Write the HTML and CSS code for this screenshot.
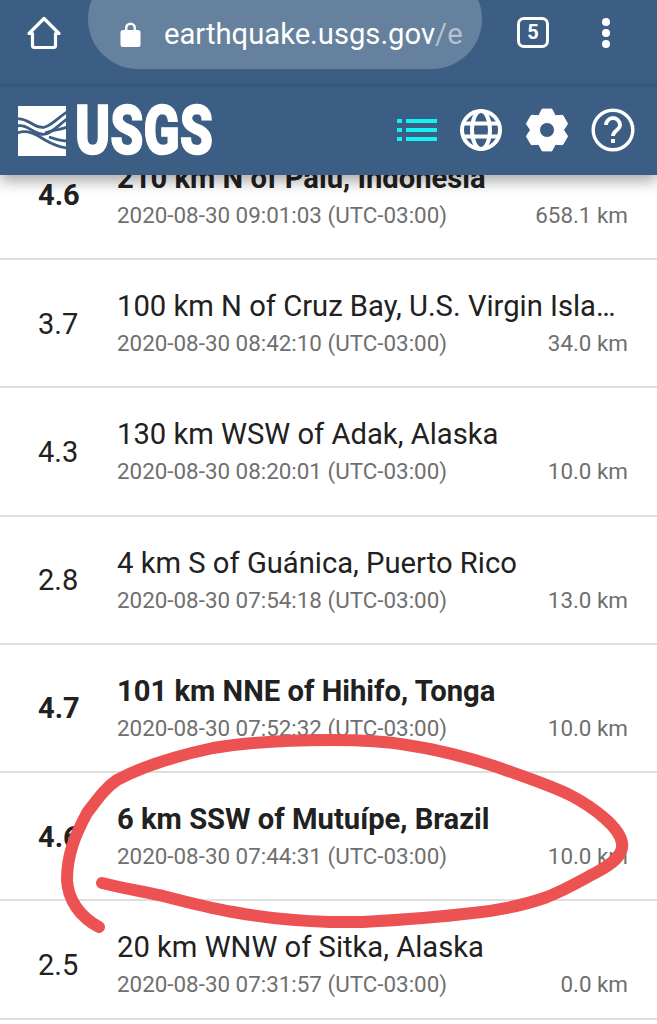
FILE: index.html
```html
<!DOCTYPE html>
<html>
<head>
  <meta name="viewport" content="width=device-width, initial-scale=1">
  <link rel="stylesheet" href="styles.css">
  <title>Latest Earthquakes</title>
</head>
<body>

<div class="page">
  <header class="header">
    <div class="browserBar">
      <svg class="homeIcon" viewBox="0 0 34 34" fill="none" stroke="#fff" stroke-width="3.2" stroke-linejoin="round" stroke-linecap="round">
        <path d="M2 17.5 17 2.5l15 15h-3.500v12a2 2 0 0 1-2 2h-19a2 2 0 0 1-2-2v-12z"/>
      </svg>
      <div class="urlPill">
        <svg class="lockIcon" viewBox="0 0 21 26" fill="#fff">
          <path d="M5 10V7a5.500 5.500 0 0 1 11 0v3h-2.400V7a3.100 3.100 0 0 0-6.200 0v3z"/>
          <rect x="0.500" y="9" width="20" height="17" rx="2.500"/>
        </svg>
        <span class="urlText">earthquake.usgs.gov<span class="urlFaded">/e</span></span>
      </div>
      <div class="tabCount">5</div>
      <div class="menuDots"><i></i><i></i><i></i></div>
    </div>

    <div class="appBar">
      <div class="logo">
        <svg class="logoMark" viewBox="0 0 48 50">
          <rect width="48" height="50" fill="#fff"/>
          <g fill="none" stroke="#3c5e84" stroke-width="2.800">
            <path d="M-1 13C10 11 17 24 27 21 34 19 41 11 49 6"/>
            <path d="M-1 20C10 17 17 31 28 28 35 26 42 18 49 13"/>
            <path d="M-1 27C10 23 19 29 27 34 34 38 41 41 49 42"/>
            <path d="M27 27C34 24 42 24 49 21"/>
            <path d="M31 31C37 33 43 35 49 35"/>
          </g>
        </svg>
        <span class="logoText">USGS</span>
      </div>
      <div class="appIcons">
        <svg class="appIcon listIcon" viewBox="0 0 40 24" fill="#13f2f2">
          <rect x="0" y="1" width="5" height="4"/>
          <rect x="9" y="1" width="31" height="4"/>
          <rect x="0" y="10" width="5" height="4"/>
          <rect x="9" y="10" width="31" height="4"/>
          <rect x="0" y="19" width="5" height="4"/>
          <rect x="9" y="19" width="31" height="4"/>
        </svg>
        <svg class="appIcon" viewBox="0 0 44 44" fill="none" stroke="#fff" stroke-width="4">
          <circle cx="22" cy="22" r="19"/>
          <ellipse cx="22" cy="22" rx="9" ry="19"/>
          <path d="M5 15.500h34M5 28.500h34"/>
        </svg>
        <svg class="appIcon" viewBox="-22 -22 44 44" fill="#fff">
          <path fill-rule="evenodd" stroke="#fff" stroke-width="1" stroke-linejoin="round" d="M-4.800-20.900 4.800-20.900 8.250-14.300 15.700-14.700 20.600-6.300 16.500 0 20.600 6.300 15.700 14.700 8.250 14.300 4.800 20.900-4.800 20.900-8.250 14.300-15.700 14.700-20.600 6.300-16.500 0-20.600-6.300-15.700-14.700-8.250-14.300zM7.500 0a7.500 7.500 0 1 0-15 0 7.500 7.500 0 1 0 15 0z"/>
        </svg>
        <svg class="appIcon" viewBox="0 0 44 44" fill="none" stroke="#fff" stroke-width="3.400">
          <circle cx="22" cy="22" r="19.800"/>
          <path d="M15 17a7 7 0 0 1 14 0c0 5-7 5.500-7 11" stroke-width="3.800"/>
          <rect x="20" y="31" width="4" height="4" fill="#fff" stroke="none"/>
        </svg>
      </div>
    </div>
  </header>

  <main class="quakeList">
    <div class="quake major">
      <div class="mag">4.6</div>
      <div class="details">
        <div class="place">210 km N of Palu, Indonesia</div>
        <div class="meta"><span>2020-08-30 09:01:03 (UTC-03:00)</span><span>658.1 km</span></div>
      </div>
    </div>
    <div class="quake">
      <div class="mag">3.7</div>
      <div class="details">
        <div class="place">100 km N of Cruz Bay, U.S. Virgin Islands</div>
        <div class="meta"><span>2020-08-30 08:42:10 (UTC-03:00)</span><span>34.0 km</span></div>
      </div>
    </div>
    <div class="quake">
      <div class="mag">4.3</div>
      <div class="details">
        <div class="place">130 km WSW of Adak, Alaska</div>
        <div class="meta"><span>2020-08-30 08:20:01 (UTC-03:00)</span><span>10.0 km</span></div>
      </div>
    </div>
    <div class="quake">
      <div class="mag">2.8</div>
      <div class="details">
        <div class="place">4 km S of Guánica, Puerto Rico</div>
        <div class="meta"><span>2020-08-30 07:54:18 (UTC-03:00)</span><span>13.0 km</span></div>
      </div>
    </div>
    <div class="quake major">
      <div class="mag">4.7</div>
      <div class="details">
        <div class="place">101 km NNE of Hihifo, Tonga</div>
        <div class="meta"><span>2020-08-30 07:52:32 (UTC-03:00)</span><span>10.0 km</span></div>
      </div>
    </div>
    <div class="quake major">
      <div class="mag">4.6</div>
      <div class="details">
        <div class="place">6 km SSW of Mutuípe, Brazil</div>
        <div class="meta"><span>2020-08-30 07:44:31 (UTC-03:00)</span><span>10.0 km</span></div>
      </div>
    </div>
    <div class="quake lastQuake">
      <div class="mag">2.5</div>
      <div class="details">
        <div class="place">20 km WNW of Sitka, Alaska</div>
        <div class="meta"><span>2020-08-30 07:31:57 (UTC-03:00)</span><span>0.0 km</span></div>
      </div>
    </div>
  </main>

  <!-- hand drawn circle on top of the list -->
  <svg class="scribble" viewBox="0 0 657 1024" fill="none" stroke="#ed5253" stroke-width="12" stroke-linecap="round" stroke-linejoin="round">
    <path d="M99 927C80 917 68 900 67 880 67 855 75 835 87 813 97 800 105 788 117 780 145 765 180 755 213 748 250 742 290 740 330 740 360 740 385 741 407 745 440 750 470 758 497 767 525 777 550 785 570 795 595 808 620 828 622 843 624 855 612 864 597 872 580 881 565 890 547 897 525 905 500 910 473 913 440 917 400 920 363 922 350 922 340 922 330 922 295 921 260 917 233 912 210 908 190 903 167 897 145 892 122 888 102 883"/>
  </svg>
</div>

</body>
</html>
```

FILE: styles.css
```css
html, body {
  margin: 0;
  height: 100%;
}

body {
  background-color: #fff;
  font-family: Roboto, "Liberation Sans", sans-serif;
  color: #212121;
  overflow: hidden;
}

.page {
  position: relative;
  height: 1024px;
  overflow: hidden;
}

.header {
  position: relative;
  z-index: 2;
  background-color: #3c5e84;
  box-shadow: 0 6px 14px rgba(0, 0, 0, 0.35);
}

.browserBar {
  height: 84px;
  box-sizing: border-box;
  display: flex;
  align-items: flex-start;
  overflow: hidden;
  border-bottom: 1px solid #38597d;
  box-shadow: 0 2px 3px rgba(0, 0, 0, 0.12);
}

.homeIcon {
  width: 34px;
  height: 34px;
  margin: 16px 0 0 27px;
  flex-shrink: 0;
}

.urlPill {
  width: 394px;
  height: 100px;
  margin: -31px 0 0 27px;
  padding: 31px 0 0 32px;
  box-sizing: border-box;
  flex-shrink: 0;
  display: flex;
  align-items: center;
  border-radius: 50px;
  background-color: #66819e;
  overflow: hidden;
}

.lockIcon {
  width: 21px;
  height: 26px;
  margin-right: 23px;
  flex-shrink: 0;
  position: relative;
  top: -1px;
}

.urlText {
  font-size: 29.2px;
  line-height: 69px;
  color: #fff;
  white-space: nowrap;
}

.urlFaded {
  color: #b4c2d1;
}

.tabCount {
  width: 26px;
  height: 25px;
  margin: 17px 0 0 35px;
  border: 3.500px solid #fff;
  border-radius: 7px;
  flex-shrink: 0;
  color: #fff;
  font-size: 20px;
  font-weight: 700;
  line-height: 25px;
  text-align: center;
}

.menuDots {
  display: flex;
  flex-direction: column;
  gap: 3px;
  margin: 18px 0 0 53px;
}

.menuDots i {
  width: 8px;
  height: 8px;
  border-radius: 50%;
  background-color: #fff;
}

.appBar {
  height: 91px;
  display: flex;
  align-items: center;
  justify-content: space-between;
  padding: 0 22px 0 18px;
}

.logo {
  display: flex;
  align-items: center;
  margin-top: 2px;
}

.logoMark {
  width: 48px;
  height: 50px;
}

.logoText {
  display: inline-block;
  width: 137px;
  margin-left: 9px;
  color: #fff;
  font-size: 69px;
  font-weight: 900;
  line-height: 51px;
  -webkit-text-stroke: 1.5px #fff;
  transform: scaleX(0.77);
  transform-origin: left center;
}

.appIcons {
  display: flex;
  align-items: center;
  gap: 22px;
  margin-top: 1px;
}

.appIcon {
  width: 44px;
  height: 44px;
}

.listIcon {
  width: 40px;
  height: 24px;
}

.quakeList {
  margin-top: -43.3px;
}

.quake {
  display: flex;
  padding: 29px 29px 20px 38px;
  height: 77.3px;
  border-bottom: 2px solid #dedede;
}

.lastQuake {
  height: 67.5px;
}

.mag {
  width: 79px;
  flex-shrink: 0;
  font-size: 29px;
  line-height: 34px;
  margin-top: 17.5px;
}

.details {
  flex: 1;
  min-width: 0;
}

.place {
  font-size: 29.2px;
  line-height: 34px;
  white-space: nowrap;
  overflow: hidden;
  text-overflow: ellipsis;
}

.meta {
  display: flex;
  justify-content: space-between;
  margin-top: 6px;
  font-size: 22.4px;
  line-height: 28px;
  color: #6f6f6f;
}

.major .mag, .major .place {
  font-weight: 700;
}

.scribble {
  position: absolute;
  top: 0;
  left: 0;
  width: 657px;
  height: 1024px;
  z-index: 1;
  pointer-events: none;
}
```
